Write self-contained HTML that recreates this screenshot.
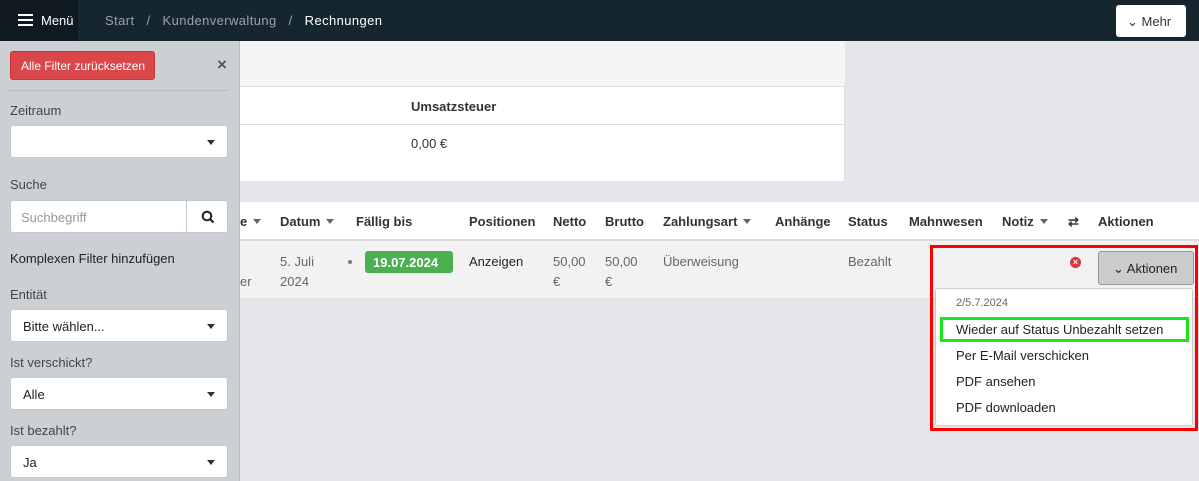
<!DOCTYPE html>
<html><head><meta charset="utf-8"><style>
*{box-sizing:border-box;margin:0;padding:0}
body{width:1199px;height:481px;overflow:hidden;background:#e5e6ea;font-family:"Liberation Sans",sans-serif;font-size:13px;color:#333;position:relative}
.abs{position:absolute}
.top{left:0;top:0;width:1199px;height:41px;background:#15262f}
.menu{left:0;top:0;width:78px;height:41px;background:#0f1a20;color:#fff;font-size:13px}
.sb{left:0;top:41px;width:240px;height:440px;background:#ccd0d5;border-right:1px solid #b8bcc2}
.lbl{font-size:13px;color:#444}
.sel{background:#fff;border:1px solid #c4c7cc;border-radius:3px;height:33px;width:218px;left:10px;padding:9px 12px;font-size:13px;color:#222}
.sel:after{content:"";position:absolute;right:12px;top:14px;border-left:4px solid transparent;border-right:4px solid transparent;border-top:5px solid #333}
.h{top:214px;font-weight:bold;font-size:13px;color:#333}
.c{top:252px;font-size:13px;color:#666;line-height:20px}
.tri{display:inline-block;border-left:4px solid transparent;border-right:4px solid transparent;border-top:5px solid #666;margin-left:6px;vertical-align:2px}
.mi{left:956px;font-size:13px;color:#222}
</style></head><body>
<div class="abs top"></div>
<div class="abs menu"><div class="abs" style="left:18px;top:14px;width:15px;height:2px;background:#fff;box-shadow:0 5px 0 #fff,0 10px 0 #fff"></div><span class="abs" style="left:41px;top:13px">Menü</span></div>
<div class="abs" style="left:105px;top:13px;color:#9aa3a8;letter-spacing:0.4px;word-spacing:2px">Start &nbsp;/&nbsp; Kundenverwaltung &nbsp;/&nbsp; <span style="color:#fff">Rechnungen</span></div>
<div class="abs" style="left:1116px;top:5px;width:70px;height:32px;background:#fff;border-radius:3px;padding:9px 0 0 11px;color:#333">⌄ Mehr</div>

<div class="abs" style="left:240px;top:41px;width:605px;height:140px;background:#fff;border-right:1px solid #ddd">
<div class="abs" style="left:0;top:0;width:605px;height:46px;background:#f4f5f7;border-bottom:1px solid #ddd"></div>
<div class="abs" style="left:0;top:83px;width:605px;border-top:1px solid #ddd"></div>
<div class="abs" style="left:171px;top:58px;font-weight:bold">Umsatzsteuer</div>
<div class="abs" style="left:171px;top:95px">0,00 €</div>
</div>

<div class="abs" style="left:240px;top:202px;width:959px;height:39px;background:#fff;border-bottom:2px solid #ddd"></div>
<div class="abs" style="left:240px;top:241px;width:959px;height:58px;background:#f2f2f2;border-bottom:1px solid #ddd"></div>
<div class="abs h" style="left:240px">e<span class="tri"></span></div>
<div class="abs h" style="left:280px">Datum<span class="tri"></span></div>
<div class="abs h" style="left:356px">Fällig bis</div>
<div class="abs h" style="left:469px">Positionen</div>
<div class="abs h" style="left:553px">Netto</div>
<div class="abs h" style="left:605px">Brutto</div>
<div class="abs h" style="left:663px">Zahlungsart<span class="tri"></span></div>
<div class="abs h" style="left:775px">Anhänge</div>
<div class="abs h" style="left:848px">Status</div>
<div class="abs h" style="left:909px">Mahnwesen</div>
<div class="abs h" style="left:1002px">Notiz<span class="tri"></span></div>
<div class="abs h" style="left:1068px">⇄</div>
<div class="abs h" style="left:1098px">Aktionen</div>

<div class="abs c" style="left:240px;top:272px">er</div>
<div class="abs c" style="left:280px">5. Juli<br>2024</div>
<div class="abs" style="left:348px;top:260px;width:4px;height:4px;border-radius:2px;background:#777"></div>
<div class="abs" style="left:365px;top:251px;width:88px;height:22px;background:#4caf50;border-radius:3px;color:#fff;font-weight:bold;font-size:13px;padding:4px 0 0 8px">19.07.2024</div>
<div class="abs c" style="left:469px;color:#222">Anzeigen</div>
<div class="abs c" style="left:553px">50,00<br>€</div>
<div class="abs c" style="left:605px">50,00<br>€</div>
<div class="abs c" style="left:663px">Überweisung</div>
<div class="abs c" style="left:848px">Bezahlt</div>

<div class="abs" style="left:930px;top:245px;width:268px;height:186px;border:3px solid #f00"></div>
<div class="abs" style="left:1070px;top:257px;width:11px;height:11px;border-radius:6px;background:#d9363e;color:#fff;font-size:9px;line-height:11px;text-align:center;font-weight:bold">×</div>
<div class="abs" style="left:1098px;top:251px;width:96px;height:34px;background:#ccc;border:1px solid #999;border-radius:3px;padding:9px 0 0 14px;color:#222">⌄ Aktionen</div>
<div class="abs" style="left:935px;top:288px;width:258px;height:138px;background:#fff;border:1px solid #ccc;border-radius:3px"></div>
<div class="abs mi" style="top:297px;font-size:11px;color:#666">2/5.7.2024</div>
<div class="abs" style="left:940px;top:317px;width:249px;height:25px;border:3px solid #1be51b"></div>
<div class="abs mi" style="top:322px">Wieder auf Status Unbezahlt setzen</div>
<div class="abs mi" style="top:348px">Per E-Mail verschicken</div>
<div class="abs mi" style="top:374px">PDF ansehen</div>
<div class="abs mi" style="top:400px">PDF downloaden</div>

<div class="abs sb">
<div class="abs" style="left:10px;top:10px;width:145px;height:29px;background:#d9474b;border:1px solid #c33;border-radius:3px;color:#fff;font-size:12px;padding:7px 0 0 10px">Alle Filter zurücksetzen</div>
<div class="abs" style="left:217px;top:14px;font-size:17px;color:#555;font-weight:bold">×</div>
<div class="abs" style="left:9px;top:49px;width:220px;border-top:1px solid #b8bcc2"></div>
<div class="abs lbl" style="left:10px;top:62px">Zeitraum</div>
<div class="abs sel" style="top:84px"></div>
<div class="abs lbl" style="left:10px;top:136px">Suche</div>
<div class="abs" style="left:10px;top:159px;width:218px;height:33px;background:#fff;border:1px solid #c4c7cc;border-radius:3px;padding:9px 10px;color:#999">Suchbegriff
<div class="abs" style="left:175px;top:0;width:1px;height:31px;background:#c4c7cc"></div>
<svg class="abs" style="left:190px;top:9px" width="14" height="14" viewBox="0 0 14 14"><circle cx="6" cy="6" r="4.3" fill="none" stroke="#222" stroke-width="2"/><path d="M9 9l3.5 3.5" stroke="#222" stroke-width="2.2"/></svg></div>
<div class="abs" style="left:10px;top:210px;color:#222">Komplexen Filter hinzufügen</div>
<div class="abs lbl" style="left:10px;top:246px">Entität</div>
<div class="abs sel" style="top:268px">Bitte wählen...</div>
<div class="abs lbl" style="left:10px;top:314px">Ist verschickt?</div>
<div class="abs sel" style="top:336px">Alle</div>
<div class="abs lbl" style="left:10px;top:382px">Ist bezahlt?</div>
<div class="abs sel" style="top:404px">Ja</div>
</div>
</body></html>
